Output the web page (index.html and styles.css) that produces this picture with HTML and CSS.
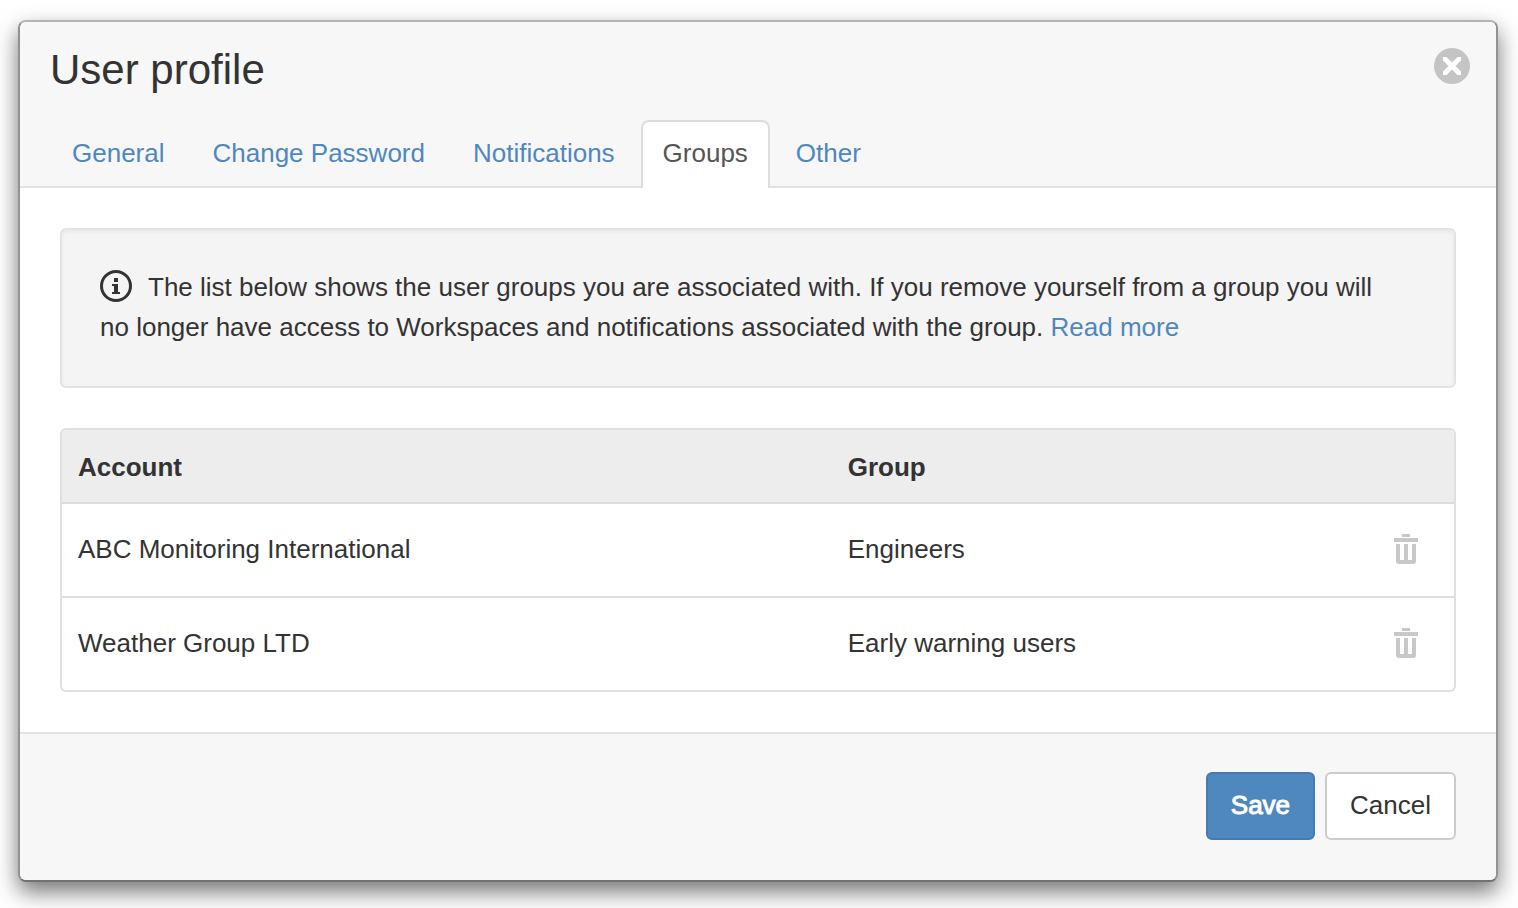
FILE: index.html
```html
<!DOCTYPE html>
<html lang="en">
<head>
  <meta charset="utf-8">
  <meta name="viewport" content="width=device-width, initial-scale=1">
  <title>User profile</title>
  <link rel="stylesheet" href="styles.css">
</head>
<body>
  <main class="modal" role="dialog" aria-labelledby="dialog-title">
    <header class="modal-header">
      <div class="title-row">
        <h1 class="modal-title" id="dialog-title">User profile</h1>
        <button class="icon-button close" type="button" aria-label="Close">
          <svg width="36" height="36" viewBox="0 0 36 36" aria-hidden="true">
            <circle cx="18" cy="18" r="18" fill="#c4c4c4"/>
            <path d="M9 9h3.500l5.500 5.500 5.500-5.500H27v3.500L21.500 18l5.500 5.500V27h-3.500L18 21.500 12.500 27H9v-3.500l5.500-5.500L9 12.500z" fill="#fff"/>
          </svg>
        </button>
      </div>
      <nav class="tabs">
        <a class="tab" href="#general">General</a>
        <a class="tab" href="#password">Change Password</a>
        <a class="tab" href="#notifications">Notifications</a>
        <a class="tab tab-active" href="#groups" aria-current="page">Groups</a>
        <a class="tab" href="#other">Other</a>
      </nav>
    </header>

    <section class="modal-body">
      <p class="well"><svg class="info-icon" width="32" height="32" viewBox="0 0 32 32" aria-hidden="true"><circle cx="16" cy="16" r="14.5" fill="none" stroke="#333" stroke-width="3"/><path d="M14 8h4v4h-4zM12 14h6v8h2v2h-8v-2h2v-6h-2z" fill="#333"/></svg>The list below shows the user groups you are associated with. If you remove yourself from a group you will no longer have access to Workspaces and notifications associated with the group. <a class="link" href="#more">Read more</a></p>

      <div class="table-frame">
        <table class="groups">
          <thead>
            <tr>
              <th class="col-account" scope="col">Account</th>
              <th scope="col">Group</th>
              <td class="col-action"></td>
            </tr>
          </thead>
          <tbody>
            <tr>
              <td>ABC Monitoring International</td>
              <td>Engineers</td>
              <td class="col-action">
                <button class="icon-button" type="button" aria-label="Leave Engineers">
                  <svg width="24" height="30" viewBox="0 0 24 30" aria-hidden="true">
                    <path d="M8 0h8v3H8zM0 4h24v4H0zM2 10h4v16h4V10h4v16h4V10h4v17q0 3-3 3H5q-3 0-3-3z" fill="#c8c8c8"/>
                  </svg>
                </button>
              </td>
            </tr>
            <tr>
              <td>Weather Group LTD</td>
              <td>Early warning users</td>
              <td class="col-action">
                <button class="icon-button" type="button" aria-label="Leave Early warning users">
                  <svg width="24" height="30" viewBox="0 0 24 30" aria-hidden="true">
                    <path d="M8 0h8v3H8zM0 4h24v4H0zM2 10h4v16h4V10h4v16h4V10h4v17q0 3-3 3H5q-3 0-3-3z" fill="#c8c8c8"/>
                  </svg>
                </button>
              </td>
            </tr>
          </tbody>
        </table>
      </div>
    </section>

    <footer class="modal-footer">
      <button class="button button-primary" type="button">Save</button>
      <button class="button" type="button">Cancel</button>
    </footer>
  </main>
</body>
</html>
```
FILE: styles.css
```css
* {
  box-sizing: border-box;
}

body {
  margin: 0;
  padding: 20px 20px 26px 18px;
  background: #fff;
  color: #333;
  font-family: "Helvetica Neue", "Liberation Sans", Arial, sans-serif;
  font-size: 26px;
  line-height: 40px;
}

.modal {
  border: 2px solid #929292;
  border-top-color: #b4b4b4;
  border-bottom-color: #727272;
  border-radius: 8px;
  background: #fff;
  box-shadow: 0 10px 22px rgba(0, 0, 0, 0.54);
}

.modal-header {
  border-bottom: 2px solid #e2e2e2;
  border-radius: 6px 6px 0 0;
  background: #f7f7f7;
}

.title-row {
  display: flex;
  align-items: flex-start;
  justify-content: space-between;
  padding: 26px 26px 28px 30px;
}

.modal-title {
  margin: 0;
  font-size: 42px;
  font-weight: 400;
  line-height: 44px;
}

.icon-button {
  display: inline-flex;
  padding: 0;
  border: 0;
  background: none;
  cursor: pointer;
}

.tabs {
  display: flex;
  gap: 4px;
  margin-bottom: -2px;
  padding: 0 30px;
}

.tab {
  padding: 11px 20px 13px;
  border: 2px solid transparent;
  border-bottom: 0;
  border-radius: 8px 8px 0 0;
  color: #4f87bf;
  text-decoration: none;
}

.tab-active {
  padding-bottom: 15px;
  border-color: #ddd;
  background: #fff;
  color: #555;
}

.link {
  color: #4f87bf;
  text-decoration: none;
}

.modal-body {
  padding: 40px;
}

.well {
  margin: 0 0 40px;
  padding: 37px 60px 39px 38px;
  border: 2px solid #e3e3e3;
  border-radius: 6px;
  background: #f4f4f4;
  box-shadow: inset 0 2px 4px rgba(0, 0, 0, 0.05);
}

.info-icon {
  margin-right: 16px;
  vertical-align: -6px;
}

.table-frame {
  overflow: hidden;
  border: 2px solid #e0e0e0;
  border-radius: 6px;
}

.groups {
  width: 100%;
  border-collapse: collapse;
  table-layout: fixed;
}

.groups th,
.groups td {
  padding: 25px 16px 27px;
  text-align: left;
}

.groups thead th,
.groups thead td {
  padding: 17px 16px 15px;
  background: #ededed;
}

.groups tbody tr {
  border-top: 2px solid #ddd;
}

.groups .col-account {
  width: 55.3%;
}

.groups .col-action {
  width: 96px;
  padding: 0 36px 2px;
  line-height: 0;
}

.modal-footer {
  display: flex;
  justify-content: flex-end;
  gap: 10px;
  padding: 38px 40px 40px;
  border-top: 2px solid #e2e2e2;
  border-radius: 0 0 6px 6px;
  background: #f7f7f7;
}

.button {
  padding: 11px 23px 13px;
  border: 2px solid #ccc;
  border-radius: 6px;
  background: #fff;
  color: #333;
  font: inherit;
  cursor: pointer;
}

.button-primary {
  border-color: #457bb2;
  background: #4f88bf;
  color: #fff;
  -webkit-text-stroke: 1px #fff;
}
```
